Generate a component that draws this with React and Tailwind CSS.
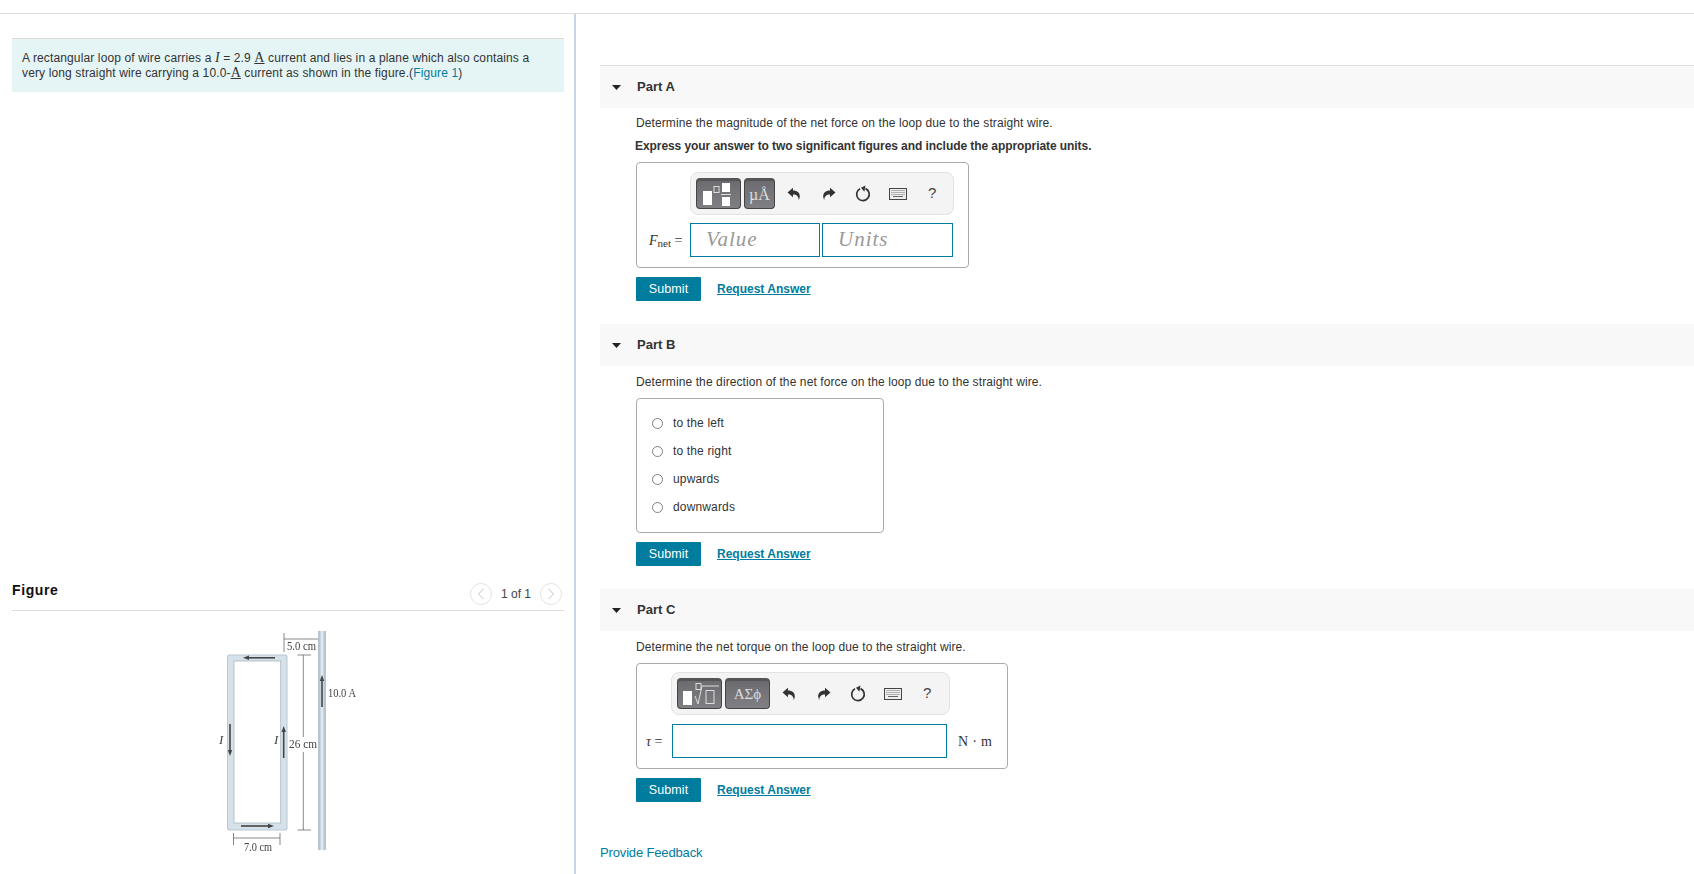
import React from "react";

const sans = "font-['Liberation_Sans',Arial,sans-serif]";
const serif = "font-['Liberation_Serif','Times_New_Roman',serif]";

function Undo({ flip }) {
  return (
    <svg width="14" height="14" viewBox="0 0 14 14" style={flip ? { transform: "scaleX(-1)" } : undefined}>
      <path d="M0.5 5.5 L6 0.8 V3.6 C10.5 3.6 13 6 12.8 10 L11.8 13.2 C11.6 9.6 9.8 7.6 6 7.6 V10.2 Z" fill="#333" />
    </svg>
  );
}

function Reload() {
  return (
    <svg width="16" height="17" viewBox="0 0 16 17">
      <path d="M5 3.8 A6.3 6.3 0 1 0 10.5 3.6" fill="none" stroke="#333" strokeWidth="1.7" />
      <path d="M10 0.2 L10 6.4 L6 3.2 Z" fill="#333" transform="rotate(10 8 3)" />
    </svg>
  );
}

function Keyboard() {
  return (
    <svg width="18" height="12" viewBox="0 0 18 12">
      <rect x="0.5" y="0.5" width="17" height="11" fill="#eee" stroke="#444" />
      <path d="M2.5 2.5h13M2.5 4.5h13M2.5 6.5h13" stroke="#777" strokeWidth="1" strokeDasharray="1 1" />
      <path d="M4 8.5h10" stroke="#666" strokeWidth="1" />
    </svg>
  );
}

function TemplateFraction() {
  return (
    <svg width="36" height="24" viewBox="0 0 36 24">
      <rect x="2" y="8" width="9" height="14" fill="#fff" />
      <rect x="13" y="3.5" width="5" height="6" fill="none" stroke="#ddd" />
      <rect x="21" y="0" width="8" height="9" fill="#fff" />
      <rect x="20" y="11" width="10" height="1" fill="#ddd" />
      <rect x="21" y="14" width="8" height="9" fill="#fff" />
    </svg>
  );
}

function TemplateRoot() {
  return (
    <svg width="38" height="24" viewBox="0 0 38 24">
      <rect x="2" y="8" width="9" height="14" fill="#fff" />
      <rect x="15" y="0.5" width="5" height="6" fill="none" stroke="#ddd" />
      <path d="M14 13 L17 21 L21 3 H38" fill="none" stroke="#ddd" />
      <rect x="25" y="7.5" width="8" height="13" fill="none" stroke="#ddd" />
    </svg>
  );
}

function DarkButton({ w, children }) {
  return (
    <div className={`${w} h-[31px] shrink-0 rounded-[4px] border border-[#444] border-t-[3px] border-t-[#555] bg-gradient-to-b from-[#6c6c70] to-[#808084] flex items-center justify-center`}>
      {children}
    </div>
  );
}

function Toolbar({ className, first, second, gaps }) {
  return (
    <div className={`h-[43px] rounded-lg border border-[#e2e2e2] bg-[#f4f4f4] flex items-center ${className}`}>
      <div className="flex gap-[3px]">
        {first}
        {second}
      </div>
      <div className={`flex items-center justify-center w-[14px] ${gaps}`}><Undo /></div>
      <div className="flex items-center justify-center w-[14px] ml-[21px]"><Undo flip /></div>
      <div className="flex items-center justify-center w-[16px] ml-[19px]"><Reload /></div>
      <div className="flex items-center justify-center w-[18px] ml-[18px]"><Keyboard /></div>
      <div className={`ml-[21px] text-[15px] text-[#444] ${sans}`}>?</div>
    </div>
  );
}

function PartHeader({ label }) {
  return (
    <div className="h-[42px] bg-[#f8f8f8] flex items-center">
      <svg width="9" height="5" viewBox="0 0 9 5" className="ml-3 shrink-0"><path d="M0 0H9L4.5 5Z" fill="#222" /></svg>
      <span className="ml-4 text-[13px] font-bold text-[#333]">{label}</span>
    </div>
  );
}

function Actions({ className = "" }) {
  return (
    <div className={`flex items-center ${className}`}>
      <button className="w-[65px] h-6 rounded-[1px] bg-[#007c9e] text-white text-[12.5px] tracking-[0.1px]">Submit</button>
      <a className="ml-4 text-[#007c9e] text-[12px] font-bold underline">Request Answer</a>
    </div>
  );
}

function Radio({ label }) {
  return (
    <div className="h-7 flex items-center pl-[15px]">
      <span className="w-[11px] h-[11px] rounded-full border border-[#808080] bg-white shrink-0" />
      <span className="ml-2.5 text-[12px] text-[#333] tracking-[0.15px]">{label}</span>
    </div>
  );
}

function Figure() {
  return (
    <svg width="200" height="264" viewBox="0 0 200 264" className="ml-[168px] block">
      <defs>
        <filter id="soft"><feGaussianBlur stdDeviation="0.35" /></filter>
      </defs>
      <g filter="url(#soft)">
        <rect x="47" y="43.5" width="60.5" height="176" rx="2.5" fill="#b9c8d3" />
        <rect x="48" y="44.5" width="58.5" height="174" rx="2" fill="#d6e1e9" />
        <rect x="54" y="50" width="46.7" height="162" fill="#fff" stroke="#a8b8c4" strokeWidth="0.8" />
        <rect x="138" y="20" width="8" height="219" fill="#b5c5d1" />
        <rect x="140.5" y="20" width="3" height="219" fill="#dfe8ee" />
        <g fill="#444" stroke="#444">
          <path d="M95 46.8H68" strokeWidth="1.6" fill="none" />
          <path d="M63 46.8L69 44.6V49Z" stroke="none" />
          <path d="M50 113V140" strokeWidth="1.6" fill="none" />
          <path d="M50 145L47.8 139H52.2Z" stroke="none" />
          <path d="M103.7 147V120" strokeWidth="1.6" fill="none" />
          <path d="M103.7 115L101.5 121H105.9Z" stroke="none" />
          <path d="M61 215H88" strokeWidth="1.6" fill="none" />
          <path d="M94 215L88 212.8V217.2Z" stroke="none" />
          <path d="M142 96V69" strokeWidth="1.6" fill="none" />
          <path d="M142 64L139.8 70H144.2Z" stroke="none" />
        </g>
        <g stroke="#555" strokeWidth="0.7" fill="none">
          <path d="M104 22V41M104 28H138" />
          <path d="M123.3 44V219M117.5 44H131M117.5 219H131" />
          <path d="M53.5 222V234M100 222V234M53.5 227H100" />
        </g>
        <rect x="108" y="126" width="29" height="15" fill="#fff" />
        <g className={serif} fill="#444" fontSize="12">
          <text x="107" y="39" textLength="29" lengthAdjust="spacingAndGlyphs">5.0 cm</text>
          <text x="109" y="137" textLength="28" lengthAdjust="spacingAndGlyphs">26 cm</text>
          <text x="148" y="86" textLength="28" lengthAdjust="spacingAndGlyphs">10.0 A</text>
          <rect x="62" y="231" width="32" height="11" fill="#fff" />
          <text x="64" y="240" textLength="28" lengthAdjust="spacingAndGlyphs">7.0 cm</text>
          <text x="39" y="133" fontStyle="italic" fontSize="13">I</text>
          <text x="94" y="133" fontStyle="italic" fontSize="13">I</text>
        </g>
      </g>
    </svg>
  );
}

function Circle({ dir }) {
  return (
    <span className="w-[22px] h-[22px] rounded-full border border-[#e4e4e4] flex items-center justify-center">
      <svg width="8" height="12" viewBox="0 0 8 12">
        <path d={dir === "l" ? "M6.5 1L1.5 6L6.5 11" : "M1.5 1L6.5 6L1.5 11"} fill="none" stroke="#c4c4c4" strokeWidth="1" />
      </svg>
    </span>
  );
}

const mathA = `${serif} underline text-[14px] leading-none`;

export default function App() {
  return (
    <div className={`h-[874px] overflow-hidden bg-white text-[#333] pt-[13px] ${sans}`}>
      <div className="h-[861px] border-t border-[#dedede] flex">
        <div className="w-[576px] shrink-0 border-r-2 border-[#c3d5e6] flex flex-col pt-6 pl-3 pr-[11px]">
          <div className="h-[54px] w-[552px] bg-[#e5f5f6] border-t border-[#dcdcdc] pt-3 pl-[10px] text-[12px] leading-[15px] tracking-[0.13px] text-[#333]">
            <div className="h-[15px]">
              A rectangular loop of wire carries a <i className={`${serif} text-[14px] leading-none`}>I</i> = 2.9 <span className={mathA}>A</span> current and lies in a plane which also contains a
            </div>
            <div className="h-[15px]">
              very long straight wire carrying a 10.0-<span className={mathA}>A</span> current as shown in the figure.(<span className="text-[#007c9e]">Figure 1</span>)
            </div>
          </div>
          <div className="mt-auto w-[552px]">
            <div className="h-[35px] border-b border-[#dcdcdc] flex items-center">
              <span className="mb-[6px] text-[14px] font-bold text-[#111] tracking-[0.6px]">Figure</span>
              <span className="ml-auto mr-[2px] mt-[2px] flex items-center gap-[9px] text-[12px] text-[#444]">
                <Circle dir="l" />
                <span>1 of 1</span>
                <Circle dir="r" />
              </span>
            </div>
            <div className="h-[263px]"><Figure /></div>
          </div>
        </div>

        <div className="flex-1 pl-6 pt-[51px]">
          <div className="border-t border-[#dedede]"><PartHeader label="Part A" /></div>
          <div className="pl-9 pt-[7px]">
            <p className="text-[12px] leading-[15px] tracking-[0.1px] mt-px">Determine the magnitude of the net force on the loop due to the straight wire.</p>
            <p className="text-[12px] leading-[15px] font-bold mt-2 -ml-px tracking-[-0.07px]">Express your answer to two significant figures and include the appropriate units.</p>
            <div className="mt-2 w-[333px] h-[106px] rounded-[4px] border border-[#aaa] pt-[9px] pl-[53px]">
              <Toolbar
                className="w-[264px] pl-[5px]"
                first={<DarkButton w="w-[45px]"><TemplateFraction /></DarkButton>}
                second={<DarkButton w="w-[31px]"><span className={`${serif} text-[#ddd] text-[16px]`}>µÅ</span></DarkButton>}
                gaps="ml-3"
              />
              <div className="flex items-center mt-2 -ml-[43px]">
                <span className={`${serif} text-[14px] w-[43px] whitespace-nowrap pl-[2px]`}><i>F</i><sub className="text-[11px]">net</sub> =</span>
                <div className={`w-[130px] h-[34px] border border-[#007c9e] pl-[15px] flex items-center italic text-[21px] tracking-[1px] text-[#999] ${serif}`}>Value</div>
                <div className={`ml-[2px] w-[131px] h-[34px] border border-[#007c9e] pl-[15px] flex items-center italic text-[21px] tracking-[1px] text-[#999] ${serif}`}>Units</div>
              </div>
            </div>
            <Actions className="mt-[9px]" />
          </div>

          <div className="mt-[23px]"><PartHeader label="Part B" /></div>
          <div className="pl-9 pt-[9px]">
            <p className="text-[12px] leading-[15px] tracking-[0.1px]">Determine the direction of the net force on the loop due to the straight wire.</p>
            <div className="mt-2 w-[248px] h-[135px] rounded-[4px] border border-[#aaa] pt-[10px]">
              <Radio label="to the left" />
              <Radio label="to the right" />
              <Radio label="upwards" />
              <Radio label="downwards" />
            </div>
            <Actions className="mt-[9px]" />
          </div>

          <div className="mt-[23px]"><PartHeader label="Part C" /></div>
          <div className="pl-9 pt-[9px]">
            <p className="text-[12px] leading-[15px] tracking-[0.1px]">Determine the net torque on the loop due to the straight wire.</p>
            <div className="mt-2 w-[372px] h-[106px] rounded-[4px] border border-[#aaa] pt-2 pl-[34px]">
              <Toolbar
                className="w-[279px] pl-[5px]"
                first={<DarkButton w="w-[45px]"><TemplateRoot /></DarkButton>}
                second={<DarkButton w="w-[45px]"><span className={`${serif} text-[#ddd] text-[15px]`}>ΑΣϕ</span></DarkButton>}
                gaps="ml-3"
              />
              <div className="flex items-center mt-[9px] -ml-[25px]">
                <span className={`${serif} text-[14px] w-[26px] whitespace-nowrap`}><i>τ</i> =</span>
                <div className="w-[275px] h-[34px] border border-[#007c9e]" />
                <span className={`${serif} ml-[11px] text-[14px] text-[#333] tracking-[0.3px] whitespace-nowrap`}>N · m</span>
              </div>
            </div>
            <Actions className="mt-[9px]" />
          </div>
          <a className="block mt-[43px] text-[#007c9e] text-[13px] leading-4 tracking-[-0.15px]">Provide Feedback</a>
        </div>
      </div>
    </div>
  );
}
